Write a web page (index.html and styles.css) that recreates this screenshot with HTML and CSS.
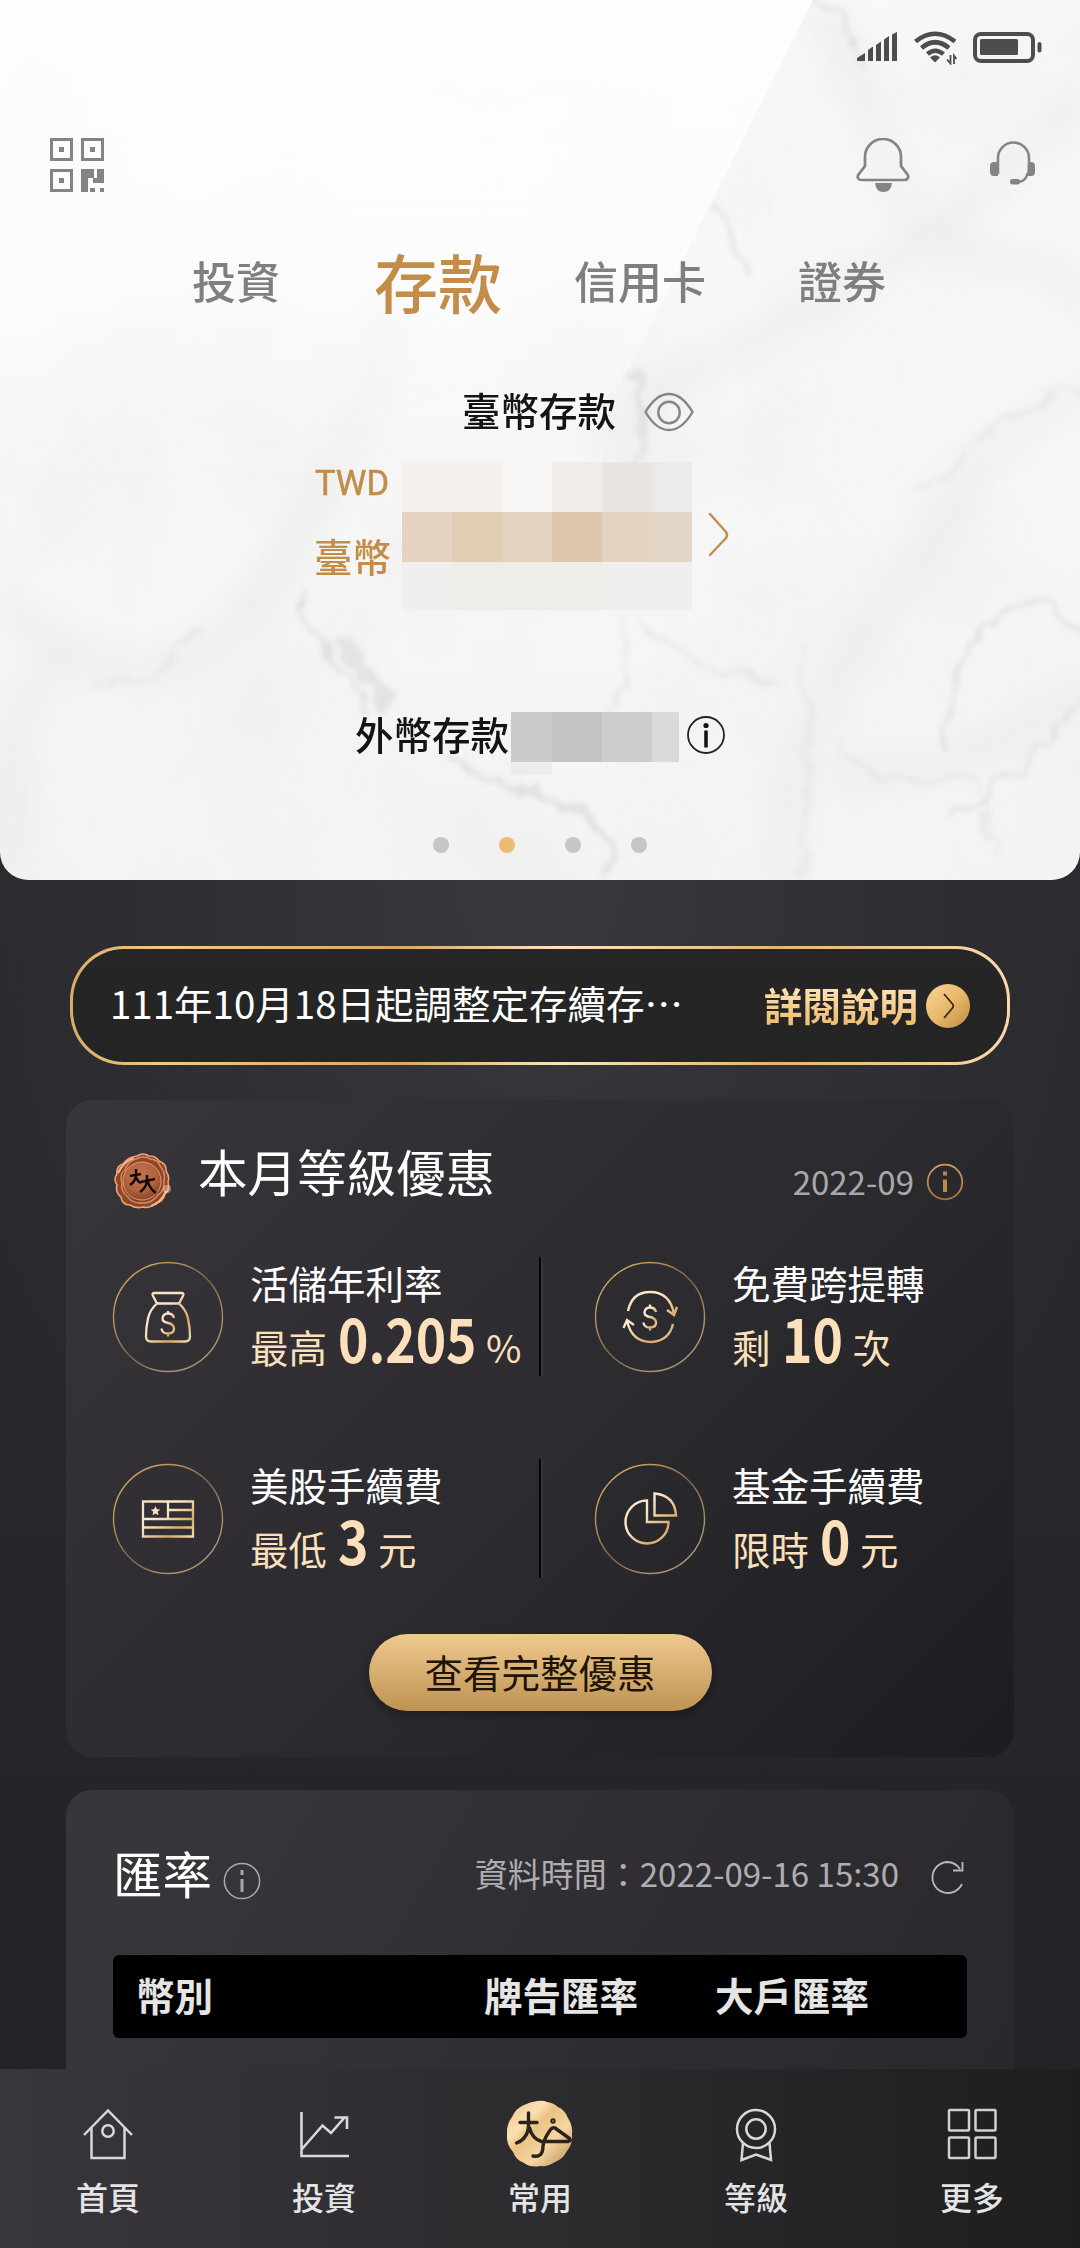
FILE: index.html
```
<!DOCTYPE html>
<html lang="zh-Hant">
<head>
<meta charset="utf-8">
<title>存款</title>
<link rel="stylesheet" href="styles.css">
</head>
<body>
<svg class="defs" width="0" height="0" aria-hidden="true">
  <defs>
    <linearGradient id="gold" x1="0" y1="0" x2="1" y2="1">
      <stop offset="0" stop-color="#f6dfb6"/><stop offset=".35" stop-color="#fbe9cf"/><stop offset=".75" stop-color="#d9a868"/><stop offset="1" stop-color="#f3dcb4"/>
    </linearGradient>
    <linearGradient id="ring" x1="0" y1="0" x2="1" y2="1">
      <stop offset="0" stop-color="#dcb673"/><stop offset=".3" stop-color="#b98f55"/><stop offset=".5" stop-color="#80664a"/><stop offset=".75" stop-color="#a99067"/><stop offset="1" stop-color="#b9a586"/>
    </linearGradient>
    <linearGradient id="copper" x1="0" y1="0" x2="0" y2="1">
      <stop offset="0" stop-color="#cf9d63"/><stop offset="1" stop-color="#a8713a"/>
    </linearGradient>
    <linearGradient id="coin" x1="0" y1="0" x2="1" y2="1">
      <stop offset="0" stop-color="#ecc382"/><stop offset=".3" stop-color="#fbe0b4"/><stop offset=".42" stop-color="#ebc284"/><stop offset=".65" stop-color="#f6d6a2"/><stop offset="1" stop-color="#b98b55"/>
    </linearGradient>
    <radialGradient id="seal" cx=".45" cy=".35" r=".65">
      <stop offset="0" stop-color="#bd7350"/><stop offset=".6" stop-color="#b4653f"/><stop offset="1" stop-color="#8c4628"/>
    </radialGradient>
  </defs>
</svg>

<section class="hero">
  <svg class="marble" viewBox="0 0 1080 880" preserveAspectRatio="none" aria-hidden="true">
    <defs>
      <filter id="soft" x="-20%" y="-20%" width="140%" height="140%"><feGaussianBlur stdDeviation="17"/></filter>
      <filter id="fine" x="-20%" y="-20%" width="140%" height="140%"><feTurbulence type="fractalNoise" baseFrequency=".03" numOctaves="4" seed="4"/><feDisplacementMap in="SourceGraphic" scale="30" xChannelSelector="R" yChannelSelector="G"/><feGaussianBlur stdDeviation="2.600"/></filter>
      <filter id="cloud" x="0" y="0" width="100%" height="100%"><feTurbulence type="fractalNoise" baseFrequency=".006 .004" numOctaves="4" seed="11"/><feColorMatrix values="0 0 0 0 .8  0 0 0 0 .8  0 0 0 0 .8  1.600 0 0 0 -.68"/></filter>
      <linearGradient id="base" x1="0" y1="0" x2="0" y2="1"><stop offset="0" stop-color="#f9f9f9"/><stop offset="1" stop-color="#f4f4f4"/></linearGradient>
      <linearGradient id="shine" x1="0" y1="0" x2="0" y2="1"><stop offset="0" stop-color="#fff" stop-opacity=".8"/><stop offset=".55" stop-color="#fff" stop-opacity=".6"/><stop offset="1" stop-color="#fff" stop-opacity="0"/></linearGradient>
    </defs>
    <rect width="1080" height="880" fill="url(#base)"/>
    <rect width="1080" height="880" filter="url(#cloud)" opacity=".5"/>
    <g filter="url(#soft)" fill="none" stroke="#dedede" stroke-width="22" opacity=".4">
      <path d="M810 0q50 50 70 150t120 110 80 60"/>
      <path d="M1080 90q-70 90-160 150t-190 110-120 110"/>
      <path d="M1080 390q-90 50-140 130t-100 150 -60 210"/>
      <path d="M0 600q100 90 170 70t160-190 40-180"/>
      <path d="M20 880q-40-180 60-230"/>
      <path d="M1080 690q-80 60-120 70t-130 20"/>
    </g>
    <g filter="url(#fine)" fill="none" stroke="#cccccc" stroke-width="4" opacity=".5">
      <path d="M300 590q20 60 40 80t30 40"/>
      <path d="M332 640q20 20 36 40t22 25" stroke-width="15" opacity=".8"/>
      <path d="M440 755q40 20 70 30t70 30 30 65" stroke-width="6" opacity=".9"/>
      <path d="M815 0q40 30 50 70"/>
      <path d="M715 200q15 40 40 70"/>
      <path d="M635 370q20 60-6 100" stroke-width="7" opacity=".8"/>
      <path d="M650 620q20 50 130 60" opacity=".6"/>
      <path d="M1080 630q-40-50-90-10t-40 130"/>
      <path d="M1080 700q-40 60-130 120"/>
      <path d="M840 740q30 50 80 40t60 20 20 60" opacity=".5"/>
      <path d="M620 620q10 60-10 90" opacity=".6"/>
      <path d="M90 690q70 0 110-60" opacity=".5"/>
      <path d="M1080 390q-70 20-100 50t-60 50" opacity=".5"/>
      <path d="M800 640q20 90 0 240" opacity=".35" stroke-width="8"/>
      <path d="M430 90q40 20 160-10" opacity=".35"/>
    </g>
    <path d="M0 0H813L622 382 500 500H0Z" fill="url(#shine)"/>
  </svg>

  <div class="status">
    <svg width="41" height="30" viewBox="0 0 41 30" fill="#4d4d4d"><path d="M0 29v-3l8-5v8zM11 29V18l5-3.500v14.500zM19 29V13l5-3.500v19.500zM27 29V7.500L32 4v25zM35 29V2.500L40 0v29z"/></svg>
    <svg class="wifi" width="43" height="34" viewBox="0 0 43 34" fill="none" stroke="#4d4d4d" stroke-width="4.600"><path d="M1.500 10.500Q21 -5 41 10.500M7.500 17Q21 5.500 35 17M13.500 23Q21 16.500 29.500 23"/><path d="M16 26.500q5.500-4.500 10 0l-5 5z" fill="#4d4d4d" stroke="none"/><path d="M36.500 24v8.500l-3.500-4M40 33v-8.500l2.500 3.500" stroke-width="1.800"/></svg>
    <svg width="69" height="31" viewBox="0 0 69 31"><rect x="2" y="2" width="58" height="27" rx="6" fill="none" stroke="#4d4d4d" stroke-width="4"/><rect x="7" y="7" width="38" height="16" rx="1.500" fill="#4d4d4d"/><rect x="64.500" y="10" width="4" height="10.500" rx="2" fill="#4d4d4d"/></svg>
  </div>

  <div class="toolbar">
    <svg class="qr" width="54" height="54" viewBox="0 0 54 54" fill="none" stroke="#848484" stroke-width="3"><path d="M1.500 1.500h20v20h-20zM32.500 1.500h20v20h-20zM1.500 32.500h20v20h-20z"/><path fill="#848484" stroke="none" d="M9 9h5v5H9zM40 9h5v5h-5zM9 40h5v5H9zM31 31h13v9h3v-9h7v14H43v-5h-5v14h-7zM40 50h5v4h-5zM50 50h4v4h-4z"/></svg>
    <svg width="54" height="54" viewBox="0 0 54 54" fill="none" stroke="#848484" stroke-width="2.700"><path d="M9 28V19a18 18 0 0 1 36 0v9l6.500 8.500c2 3-.5 5.500-3 5.500h-43c-3 0-5-2.500-3-5.500z"/><path d="M19 45h17q-1 9-8.500 9T19 45z" fill="#848484" stroke="none"/></svg>
    <svg class="headset" width="46" height="54" viewBox="0 0 46 54" fill="none" stroke="#848484"><path stroke-width="2.500" d="M8 36V20a15 15 0 0 1 31 0v10"/><path d="M8 24v14H4q-4 0-4-4v-6q0-4 4-4zM38 24h3q4 0 4 4v6q0 4-4 4h-4z" fill="#848484" stroke="none"/><path stroke-width="2.300" d="M37.500 35q-1 8-9 9"/><rect x="20" y="41" width="10" height="5.600" rx="2.500" fill="#848484" stroke="none"/></svg>
  </div>

  <nav class="tabs">
    <span>投資</span><span class="on">存款</span><span>信用卡</span><span>證券</span>
  </nav>

  <div class="heading">
    <span>臺幣存款</span>
    <svg width="50" height="40" viewBox="0 0 50 40" fill="none" stroke="#858585" stroke-width="2.400"><path d="M1.500 20Q12 2 25 2t23.500 18Q38 38 25 38T1.500 20z"/><circle cx="25" cy="20.500" r="10.700"/></svg>
  </div>

  <div class="balance">
    <div class="cur"><span class="code">TWD</span><span>臺幣</span></div>
    <div class="mosaic">
      <i class="m1"></i><i class="m1"></i><i class="m2"></i><i class="m3"></i><i class="m4"></i><i class="m5"></i>
      <i class="m6"></i><i class="m7"></i><i class="m6"></i><i class="m8"></i><i class="m6"></i><i class="m9"></i>
      <i class="m10"></i><i class="m11"></i><i class="m11"></i><i class="m11"></i><i class="m10"></i><i class="m12"></i>
    </div>
    <svg width="22" height="46" viewBox="0 0 22 46" fill="none" stroke="#c2914f" stroke-width="2.500" stroke-linecap="round"><path d="M2 2l16 18q2 3 0 6L2 43"/></svg>
  </div>

  <div class="foreign">
    <span>外幣存款</span>
    <div class="mask"><i class="g1"></i><i class="g2"></i><i class="g3"></i><i class="g4"></i><i class="g5"></i></div>
    <svg width="40" height="40" viewBox="0 0 40 40"><circle cx="20" cy="20" r="18" fill="none" stroke="#222" stroke-width="1.800"/><circle cx="20" cy="10.500" r="2.600" fill="#111"/><path d="M20 15.500v17" stroke="#111" stroke-width="3.500"/></svg>
  </div>

  <div class="dots"><i></i><i class="on"></i><i></i><i></i></div>
</section>

<div class="notice">
  <span class="msg">111年10月18日起調整定存續存…</span>
  <span class="more">詳閱說明</span>
  <svg width="44" height="44" viewBox="0 0 44 44"><defs><linearGradient id="btn" x1="0" y1="0" x2="1" y2="1"><stop offset="0" stop-color="#fbd494"/><stop offset=".5" stop-color="#e9b96d"/><stop offset="1" stop-color="#bd8a44"/></linearGradient></defs><circle cx="22" cy="22" r="22" fill="url(#btn)"/><path d="M18 10l8.500 10q1.500 2 0 4L18 34" fill="none" stroke="#3a2a14" stroke-width="1.800"/></svg>
</div>

<section class="card">
  <header class="cardhead">
    <svg class="seal" width="60" height="58" viewBox="0 0 60 58">
      <path d="M24 3q6-4 12 0 7 0 10 5 8 3 7 10 4 6 2 11 2 8-3 12-2 8-9 9-7 6-13 4-7 2-13-2-8 0-9-8-6-5-4-12-4-6 0-11-1-8 6-10 5-7 14-8z" fill="#8c4628" stroke="#f0a27a" stroke-width="1.600"/>
      <path d="M23 6q8-4 14 0 9 1 10 7 6 7 4 15 1 10-6 14-7 9-15 8-11 1-15-6-8-6-6-14-3-9 3-13 3-9 11-11z" fill="none" stroke="#d98a62" stroke-width="1.500"/>
      <circle cx="29" cy="28" r="19" fill="url(#seal)" stroke="#e69a72" stroke-width="1"/>
      <path d="M5 20q6-12 16-15M53 38q-5 12-15 15" stroke="#ffb38a" stroke-width="2" fill="none"/>
      <path d="M17 23l11-2M23 16v7q-1 6-6 9M23 24q2 5 5 6M28 29l14-3M34 22v7q-2 7-7 10M35 29q2 7 8 11" stroke="#160a06" stroke-width="2.500" fill="none"/>
      <circle cx="54" cy="36" r="4" fill="#ffdcb8" opacity=".45"/>
    </svg>
    <h2>本月等級優惠</h2>
    <span class="date">2022-09</span>
    <svg width="38" height="38" viewBox="0 0 38 38"><circle cx="19" cy="19" r="17.300" fill="none" stroke="url(#copper)" stroke-width="1.800"/><path d="M17 8.500h4v4h-4zM17 16.500h4v12.500h-4z" fill="#bd8849"/></svg>
  </header>

  <div class="perks">
    <div class="perk">
      <svg width="112" height="112" viewBox="0 0 112 112" fill="none" stroke="url(#gold)" stroke-width="2.300" stroke-linejoin="round"><circle cx="56" cy="56" r="54.500" stroke="url(#ring)" stroke-width="1.400"/><path d="M42.500 32h27q3 0 1.500 3L67 42.500H45L41 35q-1.500-3 1.500-3zM45 42.500q-7 6-9 15t-2 18q0 5 5 5h34q5 0 5-5 0-9-2-18t-9-15z"/><path d="M62 57q-1-4.500-6-4.500t-5.500 5Q50.500 61 56 62t6 5.500q0 5-6 5t-6.500-5M56 50v3M56 72.500v3"/></svg>
      <div><p class="name">活儲年利率</p><p class="value">最高<b class="rate">0.205</b>%</p></div>
    </div>
    <div class="perk">
      <svg width="112" height="112" viewBox="0 0 112 112" fill="none" stroke="url(#gold)" stroke-width="2.400"><circle cx="56" cy="56" r="54.500" stroke="url(#ring)" stroke-width="1.400"/><path d="M34 50Q38 31 56 31q20 0 24 22M73 49l7 5 3-8M79 63q-4 17-22 18-19 0-24-21M29.500 67l3.500-8 7 5"/><path d="M62 51q-1-4.500-6-4.500t-5.500 5Q50.500 55 56 56t6 5.500q0 5-6 5t-6.500-5M56 43.500v3M56 66.500v3"/></svg>
      <div><p class="name">免費跨提轉</p><p class="value">剩<b class="two">10</b>次</p></div>
    </div>
    <div class="perk">
      <svg width="112" height="112" viewBox="0 0 112 112" fill="none" stroke="url(#gold)" stroke-width="2.300"><circle cx="56" cy="56" r="54.500" stroke="url(#ring)" stroke-width="1.400"/><path d="M31 38.500h50v35H31zM56 38.500v17M56 47h25M31 56h50M31 64.500h50"/><path d="M43.500 43l1.400 3.200 3.400.3-2.600 2.300.8 3.400-3-1.800-3 1.800.8-3.400-2.600-2.300 3.400-.3z" fill="#f8e3c3" stroke="none"/></svg>
      <div><p class="name">美股手續費</p><p class="value">最低<b>3</b>元</p></div>
    </div>
    <div class="perk">
      <svg width="112" height="112" viewBox="0 0 112 112" fill="none" stroke="url(#gold)" stroke-width="2.400"><circle cx="56" cy="56" r="54.500" stroke="url(#ring)" stroke-width="1.400"/><path d="M53 37.500A21.500 21.500 0 1 0 74.500 59H53zM60.500 30.500v22H82q-1-20-21.500-22z"/></svg>
      <div><p class="name">基金手續費</p><p class="value">限時<b>0</b>元</p></div>
    </div>
  </div>

  <button class="cta">查看完整優惠</button>
</section>

<section class="card rates">
  <header class="ratehead">
    <h2>匯率</h2>
    <svg width="38" height="38" viewBox="0 0 38 38"><circle cx="19" cy="19" r="17.600" fill="none" stroke="#aaa9ab" stroke-width="1.500"/><path d="M19 8v5M19 17v13" stroke="#aaa9ab" stroke-width="3"/></svg>
    <span class="time">資料時間：2022-09-16 15:30</span>
    <svg class="refresh" width="36" height="36" viewBox="0 0 36 36" fill="none" stroke="#b8b7b9" stroke-width="1.800"><path d="M30 9Q25 2 17.500 2A15.500 15.500 0 1 0 32 24M23 10.500h9.500V2"/></svg>
  </header>
  <div class="thead"><span>幣別</span><span>牌告匯率</span><span>大戶匯率</span></div>
</section>

<nav class="bottom">
  <a><svg width="66" height="68" viewBox="0 0 66 68" fill="none" stroke="#d8d7da" stroke-width="2.500"><path d="M9 35L33 10.500 57 35M16.500 28v30h33V28"/><circle cx="33" cy="31" r="5.700"/></svg><span>首頁</span></a>
  <a><svg width="66" height="68" viewBox="0 0 66 68" fill="none" stroke="#d8d7da" stroke-width="2.600"><path d="M10.500 12v44H58M11 49l20.500-23.500 8.500 7.500 14-16M43.500 17.500H56V29"/></svg><span>投資</span></a>
  <a><svg width="66" height="68" viewBox="0 0 66 68"><path d="M30 1q6-1 10 1 7 1 11 5 7 3 10 11 5 8 4 16 1 10-5 17-4 8-12 11-7 5-15 4-9 2-16-3-8-3-11-11Q-1 44 0 34q-1-9 5-17 4-9 12-12 6-3 13-4z" fill="url(#coin)"/><g fill="none" stroke="#2b241d" stroke-width="3.400" stroke-linecap="round" stroke-linejoin="round"><path d="M13 22.500h17M21.500 13v9q1 16-12 21M22.500 28q3 11 12 13.500h27q3-1 1-3L48 28q-2-1-4 1-7 9-8 17 0 12-10 10"/><circle cx="46" cy="21" r="1"/></g></svg><span>常用</span></a>
  <a><svg width="66" height="68" viewBox="0 0 66 68" fill="none" stroke="#d8d7da" stroke-width="2.500"><circle cx="33" cy="29" r="19"/><circle cx="33" cy="29" r="9.700"/><path d="M20 43l-1.500 17L33 54.500 48 60l-1.500-17"/></svg><span>等級</span></a>
  <a><svg width="66" height="68" viewBox="0 0 66 68" fill="none" stroke="#d0d0d0" stroke-width="2.500"><rect x="10" y="10" width="20" height="20.500" rx="1"/><rect x="36.500" y="10" width="20" height="20.500" rx="1"/><rect x="10" y="37.500" width="20" height="20.500" rx="1"/><rect x="36.500" y="37.500" width="20" height="20.500" rx="1"/></svg><span>更多</span></a>
</nav>
</body>
</html>
```
FILE: styles.css
```
* { box-sizing: border-box; margin: 0; padding: 0; }

body {
  width: 1080px;
  height: 2248px;
  overflow: hidden;
  display: flex;
  flex-direction: column;
  font-family: "Noto Sans CJK TC", "Noto Sans", sans-serif;
  font-size: 38.5px;
  line-height: 44px;
  color: #fff;
  background: radial-gradient(ellipse 600px 900px at 540px 860px, #3a393d 0, #333236 35%, transparent 100%),
    linear-gradient(#2c2b2f, #29282c 60%, #222125);
}

svg { flex: none; display: block; }
i { display: block; }
h2 { font-size: 49.5px; font-weight: 400; line-height: 60px; }
.defs { position: absolute; }

/* hero */
.hero {
  position: relative;
  z-index: 0;
  flex: none;
  height: 880px;
  border-radius: 0 0 28px 28px;
  overflow: hidden;
  display: flex;
  flex-direction: column;
  color: #141414;
}
.marble { position: absolute; inset: 0; width: 100%; height: 100%; z-index: -1; }

.status { height: 94px; padding: 0 38px 0 0; display: flex; justify-content: flex-end; align-items: center; gap: 16px; }
.wifi { margin-top: 2px; }

.toolbar { height: 142px; padding: 0 44px 0 50px; display: flex; align-items: center; }
.toolbar .qr { margin-right: auto; }
.toolbar .headset { margin-left: 80px; }

.tabs { height: 90px; padding: 0 137px 2px 135px; display: grid; grid-template-columns: repeat(4, 1fr); align-items: center; justify-items: center; font-size: 44px; font-weight: 500; color: #7f7f7f; white-space: nowrap; }
.tabs .on { font-size: 64px; color: #c38c48; }

.heading { height: 60px; margin-top: 54px; padding-left: 462px; display: flex; align-items: center; gap: 28px; font-weight: 500; }
.heading span { margin-top: -2px; }
.heading svg { margin-top: 3px; }

.balance { margin-top: 22px; padding-left: 314px; display: flex; height: 148px; align-items: stretch; color: #c38c48; font-weight: 500; }
.balance > svg { margin: 50px 0 0 16px; }
.cur { width: 88px; display: flex; flex-direction: column; }
.code { font-family: Roboto, "Noto Sans", sans-serif; font-size: 34.5px; font-weight: 400; margin: -1px 0 28px 1px; -webkit-text-stroke: .5px; }
.mosaic { width: 290px; display: grid; grid-template-columns: repeat(5, 50px) 40px; grid-template-rows: 50px 50px 48px; }
.m1 { background: #f4f1ec; } .m2 { background: #f8f7f6; } .m3 { background: #f1eee9; }
.m4 { background: #e9e6e2; } .m5 { background: #ebebea; } .m6 { background: #e3d3c0; }
.m7 { background: #e0cdb4; } .m8 { background: #dec7ac; } .m9 { background: #e4d6c7; }
.m10 { background: #f0efed; } .m11 { background: #efedea; } .m12 { background: #efefef; }

.foreign { height: 63px; margin-top: 102px; padding-left: 355px; display: flex; font-weight: 500; line-height: 43px; }
.foreign > svg { margin: 3px 0 0 7px; }
.mask { width: 168px; margin-left: 2px; display: grid; grid-template-columns: 41px 50px 50px 27px; grid-template-rows: 50px 13px; }
.g1 { background: #cbcbcb; } .g2 { background: #c3c3c3; } .g3 { background: #cdcdcd; } .g4 { background: #dadada; } .g5 { background: #ececec; }

.dots { margin-top: 62px; display: flex; justify-content: center; gap: 50px; }
.dots i { width: 16px; height: 16px; border-radius: 50%; background: #c5c5c5; }
.dots .on { background: #ebbc72; }

/* notice */
.notice {
  flex: none;
  height: 119px;
  margin: 66px 70px 0;
  padding: 0 37px 0 37px;
  display: flex;
  align-items: center;
  border: 3px solid transparent;
  border-radius: 54px;
  background: linear-gradient(#262626, #242424) padding-box,
    linear-gradient(90deg, #d9ac66, #f1c888 10%, #d5a865 35%, #fbe3c0 52%, #e2b673 75%, #f9d9ab) border-box;
}
.msg { flex: 1; margin-top: -8px; }
.more { margin: -3px 8px 0 0; font-weight: 700; background: linear-gradient(#ffe2b5 15%, #f0bf74 90%); -webkit-background-clip: text; background-clip: text; color: transparent; }

/* cards */
.card {
  flex: none;
  height: 657px;
  margin: 35px 66px 0;
  padding: 0 47px;
  border-radius: 26px;
  background: linear-gradient(135deg, #38353b, #2b2a2e 55%, #1d1c20);
}
.cardhead { height: 142px; display: flex; align-items: center; }
.seal { margin: 22px 25px 0 0; }
.date { margin: 20px 12px 0 auto; font-size: 33px; color: #a8a7aa; }
.cardhead > svg:last-child { margin: 21px 3px 0 0; }

.perks { margin-top: 15px; display: grid; grid-template-columns: 428px 1fr; grid-auto-rows: 119px; row-gap: 83px; }
.perk { padding-top: 3px; display: flex; gap: 26px; }
.perk:nth-child(odd) { border-right: 2px solid #050505; box-shadow: 2px 0 0 #38373a; }
.perk:nth-child(even) { padding-left: 54px; }
.perk > svg { margin: 1px 0 0 -1px; }
.name { line-height: 44px; }
.value { display: flex; align-items: baseline; line-height: 60px; color: #fbe0bb; margin-top: 3px; white-space: nowrap; }
.value b { width: 30px; margin: 0 10px 0 11px; font-size: 60px; font-weight: 700; transform: scaleX(.86); transform-origin: 0 50%; }
.value .two { width: 61px; }
.value .rate { width: 138px; }

.cta {
  display: block;
  width: 343px;
  height: 77px;
  margin: 56px auto 0;
  padding-bottom: 3px;
  border: 0;
  border-radius: 39px;
  font: inherit;
  color: #1e1408;
  background: linear-gradient(#f0c98f, #be9353);
  box-shadow: 0 4px 10px rgba(0, 0, 0, .3);
}

.rates { margin-top: 33px; height: 279px; border-radius: 26px 26px 0 0; background: linear-gradient(120deg, #38353b 10%, #302e33 55%, #29282c); }
.ratehead { height: 165px; display: flex; align-items: center; }
.ratehead > svg { margin: 16px 0 0 11px; }
.time { margin: 0 0 0 auto; font-size: 33px; color: #aeadb0; }
.ratehead .refresh { margin: 10px 1px 0 31px; }
.thead { height: 83px; padding: 0 23px 5px; border-radius: 6px; background: #000; color: #e5e5e5; font-weight: 700; display: grid; grid-template-columns: 348px 231px 1fr; align-items: center; }

/* bottom navigation */
.bottom { flex: none; height: 179px; display: grid; grid-template-columns: repeat(5, 1fr); background: linear-gradient(90deg, #39363c, #2c2b2e 50%, #1e1e1e); }
.bottom a { display: flex; flex-direction: column; align-items: center; padding-top: 31px; font-size: 32px; font-weight: 500; color: #e4e4e5; }
.bottom span { margin-top: 6px; }
```
